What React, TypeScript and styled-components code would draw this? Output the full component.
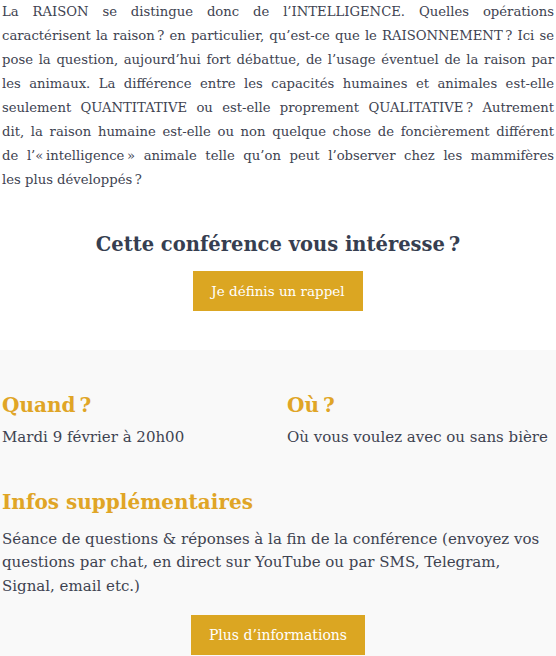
import styled, { createGlobalStyle } from "styled-components";

const GlobalStyle = createGlobalStyle`
  html, body {
    margin: 0;
    padding: 0;
    background: #ffffff;
  }
  body {
    font-family: "DejaVu Serif", "Liberation Serif", serif;
    color: #3e4351;
  }
`;

const Page = styled.div`
  width: 556px;
  height: 656px;
  overflow: hidden;
`;

const Intro = styled.section`
  padding: 0 2px;
`;

const Text = styled.p`
  margin: 0;
  font-size: 13.2px;
  line-height: 24px;
  text-align: justify;
  color: #3e4351;
`;

// une ligne justifiée du paragraphe, la dernière reste alignée à gauche
const Line = styled.span<{ $last?: boolean }>`
  display: block;
  text-align-last: ${(p) => (p.$last ? "left" : "justify")};
`;

const Cta = styled.div`
  display: flex;
  flex-direction: column;
  align-items: center;
  padding: 38px 0 39px;
  gap: 11px;
`;

const CtaTitle = styled.h2`
  margin: 0;
  font-size: 19.5px;
  line-height: 30px;
  font-weight: 700;
  color: #363e50;
`;

const Button = styled.a<{ $wide?: boolean }>`
  display: inline-flex;
  align-items: center;
  justify-content: center;
  height: 40px;
  padding: 0 18px;
  background: #dba622;
  color: #ffffff;
  font-size: ${(p) => (p.$wide ? "14px" : "13.5px")};
  text-decoration: none;
  cursor: pointer;
`;

const Details = styled.section`
  background: #f9f9f9;
  padding: 40px 2px 0;
  min-height: 320px;
`;

const Columns = styled.div`
  display: grid;
  grid-template-columns: 1fr 1fr;
  column-gap: 18px;
`;

const Block = styled.div`
  display: flex;
  flex-direction: column;
  gap: 6px;
`;

const Label = styled.h3`
  margin: 0;
  font-size: 20px;
  line-height: 30px;
  font-weight: 700;
  color: #e0a526;
`;

const Info = styled.p`
  margin: 0;
  font-size: 15px;
  line-height: 23.5px;
  color: #3e4351;
`;

const Extra = styled(Block)`
  margin-top: 37px;
  gap: 11px;
`;

const Footer = styled.div`
  display: flex;
  justify-content: center;
  padding-top: 17px;
`;

const introLines = [
  "La RAISON se distingue donc de l’INTELLIGENCE. Quelles opérations",
  "caractérisent la raison\u202f? en particulier, qu’est-ce que le RAISONNEMENT\u202f? Ici se",
  "pose la question, aujourd’hui fort débattue, de l’usage éventuel de la raison par",
  "les animaux. La différence entre les capacités humaines et animales est-elle",
  "seulement QUANTITATIVE ou est-elle proprement QUALITATIVE\u202f? Autrement",
  "dit, la raison humaine est-elle ou non quelque chose de foncièrement différent",
  "de l’«\u202fintelligence\u202f» animale telle qu’on peut l’observer chez les mammifères",
  "les plus développés\u202f?",
];

export default function App() {
  return (
    <Page>
      <GlobalStyle />
      <Intro>
        <Text>
          {introLines.map((line, i) => (
            <Line key={i} $last={i === introLines.length - 1}>
              {line}
            </Line>
          ))}
        </Text>
        <Cta>
          <CtaTitle>Cette conférence vous intéresse&#8239;?</CtaTitle>
          <Button>Je définis un rappel</Button>
        </Cta>
      </Intro>
      <Details>
        <Columns>
          <Block>
            <Label>Quand&#8239;?</Label>
            <Info>Mardi 9 février à 20h00</Info>
          </Block>
          <Block>
            <Label>Où&#8239;?</Label>
            <Info>Où vous voulez avec ou sans bière</Info>
          </Block>
        </Columns>
        <Extra>
          <Label>Infos supplémentaires</Label>
          <Info>
            Séance de questions &amp; réponses à la fin de la conférence
            (envoyez vos questions par chat, en direct sur YouTube ou par SMS,
            Telegram, Signal, email etc.)
          </Info>
        </Extra>
        <Footer>
          <Button $wide>Plus d’informations</Button>
        </Footer>
      </Details>
    </Page>
  );
}
